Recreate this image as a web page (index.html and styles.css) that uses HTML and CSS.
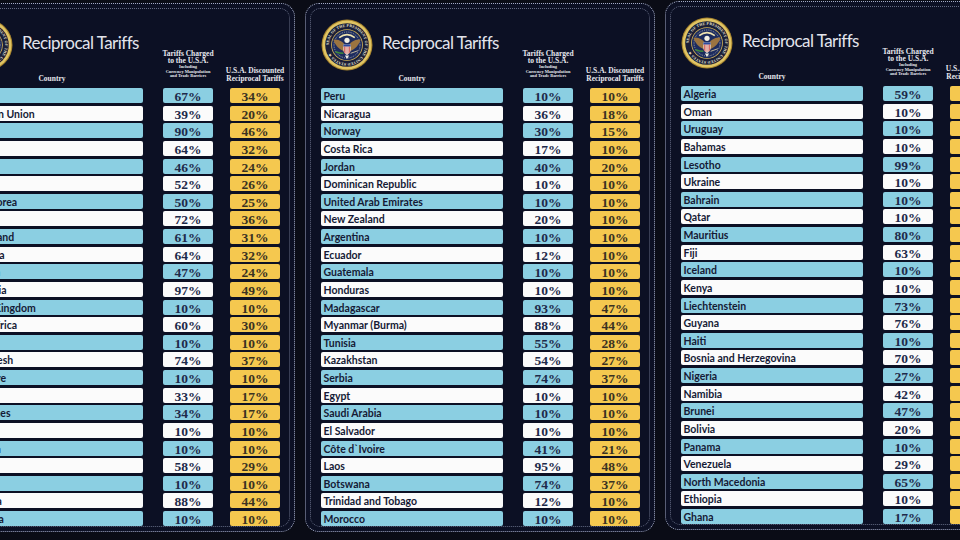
FILE: index.html
```html
<!DOCTYPE html>
<html lang="en">
<head>
<meta charset="utf-8">
<title>Reciprocal Tariffs</title>
<link rel="stylesheet" href="styles.css">
</head>
<body>
<div class="board">

  <!-- Panel 1 -->
  <section class="panel panel-first">
    <div class="head">
      <div class="hcountry">
        <div class="brand">
          <svg class="seal" viewBox="0 0 100 100" aria-hidden="true">
            <defs><path id="ring1" d="M50,50 m-35,0 a35,35 0 1,1 70,0 a35,35 0 1,1 -70,0"/></defs>
            <circle cx="50" cy="50" r="49" fill="#a8852f"/>
            <circle cx="50" cy="50" r="47" fill="#e0c463"/>
            <circle cx="50" cy="50" r="42" fill="#1a1e38"/>
            <text class="sealtext"><textPath href="#ring1">SEAL OF THE PRESIDENT OF THE UNITED STATES ★</textPath></text>
            <circle cx="50" cy="50" r="30.5" fill="#d6b658"/>
            <circle cx="50" cy="50" r="29" fill="#1d2c5e"/>
            <circle cx="50" cy="50" r="25" fill="none" stroke="#e9e6d8" stroke-width="1.6" stroke-dasharray="1.2 2.4"/>
            <path d="M35 36 Q50 24 65 36" fill="none" stroke="#efe3b0" stroke-width="3"/>
            <path d="M50 54 C42 44 34 38 24 40 C27 50 34 58 44 62 Z" fill="#9b7440"/>
            <path d="M50 54 C58 44 66 38 76 40 C73 50 66 58 56 62 Z" fill="#9b7440"/>
            <circle cx="50" cy="41" r="5" fill="#f3f0e4"/>
            <path d="M43 49 h14 v9 q0 8 -7 11 q-7 -3 -7 -11 Z" fill="#f4f2ea"/>
            <rect x="43" y="49" width="14" height="4" fill="#2b4aa0"/>
            <path d="M45 53 v12 M48 53 v14 M52 53 v14 M55 53 v12" stroke="#c8322e" stroke-width="1.5"/>
            <path d="M28 63 Q36 66 43 66" fill="none" stroke="#3e8a3a" stroke-width="3"/>
            <path d="M57 66 L71 61" stroke="#e1d2a8" stroke-width="1.6"/>
            <path d="M46 70 L50 77 L54 70 Z" fill="#f3f0e4"/>
          </svg>
          <div class="title">Reciprocal Tariffs</div>
        </div>
        <div class="hlabel">Country</div>
      </div>
      <div class="htariff">
        <div class="hl">Tariffs Charged</div>
        <div class="hl">to the U.S.A.</div>
        <div class="hs">Including</div>
        <div class="hs">Currency Manipulation</div>
        <div class="hs">and Trade Barriers</div>
      </div>
      <div class="hrecip">
        <div class="hl">U.S.A. Discounted</div>
        <div class="hl">Reciprocal Tariffs</div>
      </div>
    </div>
    <div class="rows">
      <div class="row b"><div class="c">China</div><div class="t">67%</div><div class="r">34%</div></div>
      <div class="row w"><div class="c">European Union</div><div class="t">39%</div><div class="r">20%</div></div>
      <div class="row b"><div class="c">Vietnam</div><div class="t">90%</div><div class="r">46%</div></div>
      <div class="row w"><div class="c">Taiwan</div><div class="t">64%</div><div class="r">32%</div></div>
      <div class="row b"><div class="c">Japan</div><div class="t">46%</div><div class="r">24%</div></div>
      <div class="row w"><div class="c">India</div><div class="t">52%</div><div class="r">26%</div></div>
      <div class="row b"><div class="c">South Korea</div><div class="t">50%</div><div class="r">25%</div></div>
      <div class="row w"><div class="c">Thailand</div><div class="t">72%</div><div class="r">36%</div></div>
      <div class="row b"><div class="c">Switzerland</div><div class="t">61%</div><div class="r">31%</div></div>
      <div class="row w"><div class="c">Indonesia</div><div class="t">64%</div><div class="r">32%</div></div>
      <div class="row b"><div class="c">Malaysia</div><div class="t">47%</div><div class="r">24%</div></div>
      <div class="row w"><div class="c">Cambodia</div><div class="t">97%</div><div class="r">49%</div></div>
      <div class="row b"><div class="c">United Kingdom</div><div class="t">10%</div><div class="r">10%</div></div>
      <div class="row w"><div class="c">South Africa</div><div class="t">60%</div><div class="r">30%</div></div>
      <div class="row b"><div class="c">Brazil</div><div class="t">10%</div><div class="r">10%</div></div>
      <div class="row w"><div class="c">Bangladesh</div><div class="t">74%</div><div class="r">37%</div></div>
      <div class="row b"><div class="c">Singapore</div><div class="t">10%</div><div class="r">10%</div></div>
      <div class="row w"><div class="c">Israel</div><div class="t">33%</div><div class="r">17%</div></div>
      <div class="row b"><div class="c">Philippines</div><div class="t">34%</div><div class="r">17%</div></div>
      <div class="row w"><div class="c">Chile</div><div class="t">10%</div><div class="r">10%</div></div>
      <div class="row b"><div class="c">Australia</div><div class="t">10%</div><div class="r">10%</div></div>
      <div class="row w"><div class="c">Pakistan</div><div class="t">58%</div><div class="r">29%</div></div>
      <div class="row b"><div class="c">Turkey</div><div class="t">10%</div><div class="r">10%</div></div>
      <div class="row w"><div class="c">Sri Lanka</div><div class="t">88%</div><div class="r">44%</div></div>
      <div class="row b"><div class="c">Colombia</div><div class="t">10%</div><div class="r">10%</div></div>
    </div>
  </section>

  <!-- Panel 2 -->
  <section class="panel">
    <div class="head">
      <div class="hcountry">
        <div class="brand">
          <svg class="seal" viewBox="0 0 100 100" aria-hidden="true">
            <defs><path id="ring2" d="M50,50 m-35,0 a35,35 0 1,1 70,0 a35,35 0 1,1 -70,0"/></defs>
            <circle cx="50" cy="50" r="49" fill="#a8852f"/>
            <circle cx="50" cy="50" r="47" fill="#e0c463"/>
            <circle cx="50" cy="50" r="42" fill="#1a1e38"/>
            <text class="sealtext"><textPath href="#ring2">SEAL OF THE PRESIDENT OF THE UNITED STATES ★</textPath></text>
            <circle cx="50" cy="50" r="30.5" fill="#d6b658"/>
            <circle cx="50" cy="50" r="29" fill="#1d2c5e"/>
            <circle cx="50" cy="50" r="25" fill="none" stroke="#e9e6d8" stroke-width="1.6" stroke-dasharray="1.2 2.4"/>
            <path d="M35 36 Q50 24 65 36" fill="none" stroke="#efe3b0" stroke-width="3"/>
            <path d="M50 54 C42 44 34 38 24 40 C27 50 34 58 44 62 Z" fill="#9b7440"/>
            <path d="M50 54 C58 44 66 38 76 40 C73 50 66 58 56 62 Z" fill="#9b7440"/>
            <circle cx="50" cy="41" r="5" fill="#f3f0e4"/>
            <path d="M43 49 h14 v9 q0 8 -7 11 q-7 -3 -7 -11 Z" fill="#f4f2ea"/>
            <rect x="43" y="49" width="14" height="4" fill="#2b4aa0"/>
            <path d="M45 53 v12 M48 53 v14 M52 53 v14 M55 53 v12" stroke="#c8322e" stroke-width="1.5"/>
            <path d="M28 63 Q36 66 43 66" fill="none" stroke="#3e8a3a" stroke-width="3"/>
            <path d="M57 66 L71 61" stroke="#e1d2a8" stroke-width="1.6"/>
            <path d="M46 70 L50 77 L54 70 Z" fill="#f3f0e4"/>
          </svg>
          <div class="title">Reciprocal Tariffs</div>
        </div>
        <div class="hlabel">Country</div>
      </div>
      <div class="htariff">
        <div class="hl">Tariffs Charged</div>
        <div class="hl">to the U.S.A.</div>
        <div class="hs">Including</div>
        <div class="hs">Currency Manipulation</div>
        <div class="hs">and Trade Barriers</div>
      </div>
      <div class="hrecip">
        <div class="hl">U.S.A. Discounted</div>
        <div class="hl">Reciprocal Tariffs</div>
      </div>
    </div>
    <div class="rows">
      <div class="row b"><div class="c">Peru</div><div class="t">10%</div><div class="r">10%</div></div>
      <div class="row w"><div class="c">Nicaragua</div><div class="t">36%</div><div class="r">18%</div></div>
      <div class="row b"><div class="c">Norway</div><div class="t">30%</div><div class="r">15%</div></div>
      <div class="row w"><div class="c">Costa Rica</div><div class="t">17%</div><div class="r">10%</div></div>
      <div class="row b"><div class="c">Jordan</div><div class="t">40%</div><div class="r">20%</div></div>
      <div class="row w"><div class="c">Dominican Republic</div><div class="t">10%</div><div class="r">10%</div></div>
      <div class="row b"><div class="c">United Arab Emirates</div><div class="t">10%</div><div class="r">10%</div></div>
      <div class="row w"><div class="c">New Zealand</div><div class="t">20%</div><div class="r">10%</div></div>
      <div class="row b"><div class="c">Argentina</div><div class="t">10%</div><div class="r">10%</div></div>
      <div class="row w"><div class="c">Ecuador</div><div class="t">12%</div><div class="r">10%</div></div>
      <div class="row b"><div class="c">Guatemala</div><div class="t">10%</div><div class="r">10%</div></div>
      <div class="row w"><div class="c">Honduras</div><div class="t">10%</div><div class="r">10%</div></div>
      <div class="row b"><div class="c">Madagascar</div><div class="t">93%</div><div class="r">47%</div></div>
      <div class="row w"><div class="c">Myanmar (Burma)</div><div class="t">88%</div><div class="r">44%</div></div>
      <div class="row b"><div class="c">Tunisia</div><div class="t">55%</div><div class="r">28%</div></div>
      <div class="row w"><div class="c">Kazakhstan</div><div class="t">54%</div><div class="r">27%</div></div>
      <div class="row b"><div class="c">Serbia</div><div class="t">74%</div><div class="r">37%</div></div>
      <div class="row w"><div class="c">Egypt</div><div class="t">10%</div><div class="r">10%</div></div>
      <div class="row b"><div class="c">Saudi Arabia</div><div class="t">10%</div><div class="r">10%</div></div>
      <div class="row w"><div class="c">El Salvador</div><div class="t">10%</div><div class="r">10%</div></div>
      <div class="row b"><div class="c">Côte d`Ivoire</div><div class="t">41%</div><div class="r">21%</div></div>
      <div class="row w"><div class="c">Laos</div><div class="t">95%</div><div class="r">48%</div></div>
      <div class="row b"><div class="c">Botswana</div><div class="t">74%</div><div class="r">37%</div></div>
      <div class="row w"><div class="c">Trinidad and Tobago</div><div class="t">12%</div><div class="r">10%</div></div>
      <div class="row b"><div class="c">Morocco</div><div class="t">10%</div><div class="r">10%</div></div>
    </div>
  </section>

  <!-- Panel 3 -->
  <section class="panel panel-shift">
    <div class="head">
      <div class="hcountry">
        <div class="brand">
          <svg class="seal" viewBox="0 0 100 100" aria-hidden="true">
            <defs><path id="ring3" d="M50,50 m-35,0 a35,35 0 1,1 70,0 a35,35 0 1,1 -70,0"/></defs>
            <circle cx="50" cy="50" r="49" fill="#a8852f"/>
            <circle cx="50" cy="50" r="47" fill="#e0c463"/>
            <circle cx="50" cy="50" r="42" fill="#1a1e38"/>
            <text class="sealtext"><textPath href="#ring3">SEAL OF THE PRESIDENT OF THE UNITED STATES ★</textPath></text>
            <circle cx="50" cy="50" r="30.5" fill="#d6b658"/>
            <circle cx="50" cy="50" r="29" fill="#1d2c5e"/>
            <circle cx="50" cy="50" r="25" fill="none" stroke="#e9e6d8" stroke-width="1.6" stroke-dasharray="1.2 2.4"/>
            <path d="M35 36 Q50 24 65 36" fill="none" stroke="#efe3b0" stroke-width="3"/>
            <path d="M50 54 C42 44 34 38 24 40 C27 50 34 58 44 62 Z" fill="#9b7440"/>
            <path d="M50 54 C58 44 66 38 76 40 C73 50 66 58 56 62 Z" fill="#9b7440"/>
            <circle cx="50" cy="41" r="5" fill="#f3f0e4"/>
            <path d="M43 49 h14 v9 q0 8 -7 11 q-7 -3 -7 -11 Z" fill="#f4f2ea"/>
            <rect x="43" y="49" width="14" height="4" fill="#2b4aa0"/>
            <path d="M45 53 v12 M48 53 v14 M52 53 v14 M55 53 v12" stroke="#c8322e" stroke-width="1.5"/>
            <path d="M28 63 Q36 66 43 66" fill="none" stroke="#3e8a3a" stroke-width="3"/>
            <path d="M57 66 L71 61" stroke="#e1d2a8" stroke-width="1.6"/>
            <path d="M46 70 L50 77 L54 70 Z" fill="#f3f0e4"/>
          </svg>
          <div class="title">Reciprocal Tariffs</div>
        </div>
        <div class="hlabel">Country</div>
      </div>
      <div class="htariff">
        <div class="hl">Tariffs Charged</div>
        <div class="hl">to the U.S.A.</div>
        <div class="hs">Including</div>
        <div class="hs">Currency Manipulation</div>
        <div class="hs">and Trade Barriers</div>
      </div>
      <div class="hrecip">
        <div class="hl">U.S.A. Discounted</div>
        <div class="hl">Reciprocal Tariffs</div>
      </div>
    </div>
    <div class="rows">
      <div class="row b"><div class="c">Algeria</div><div class="t">59%</div><div class="r">30%</div></div>
      <div class="row w"><div class="c">Oman</div><div class="t">10%</div><div class="r">10%</div></div>
      <div class="row b"><div class="c">Uruguay</div><div class="t">10%</div><div class="r">10%</div></div>
      <div class="row w"><div class="c">Bahamas</div><div class="t">10%</div><div class="r">10%</div></div>
      <div class="row b"><div class="c">Lesotho</div><div class="t">99%</div><div class="r">50%</div></div>
      <div class="row w"><div class="c">Ukraine</div><div class="t">10%</div><div class="r">10%</div></div>
      <div class="row b"><div class="c">Bahrain</div><div class="t">10%</div><div class="r">10%</div></div>
      <div class="row w"><div class="c">Qatar</div><div class="t">10%</div><div class="r">10%</div></div>
      <div class="row b"><div class="c">Mauritius</div><div class="t">80%</div><div class="r">40%</div></div>
      <div class="row w"><div class="c">Fiji</div><div class="t">63%</div><div class="r">32%</div></div>
      <div class="row b"><div class="c">Iceland</div><div class="t">10%</div><div class="r">10%</div></div>
      <div class="row w"><div class="c">Kenya</div><div class="t">10%</div><div class="r">10%</div></div>
      <div class="row b"><div class="c">Liechtenstein</div><div class="t">73%</div><div class="r">37%</div></div>
      <div class="row w"><div class="c">Guyana</div><div class="t">76%</div><div class="r">38%</div></div>
      <div class="row b"><div class="c">Haiti</div><div class="t">10%</div><div class="r">10%</div></div>
      <div class="row w"><div class="c">Bosnia and Herzegovina</div><div class="t">70%</div><div class="r">35%</div></div>
      <div class="row b"><div class="c">Nigeria</div><div class="t">27%</div><div class="r">14%</div></div>
      <div class="row w"><div class="c">Namibia</div><div class="t">42%</div><div class="r">21%</div></div>
      <div class="row b"><div class="c">Brunei</div><div class="t">47%</div><div class="r">24%</div></div>
      <div class="row w"><div class="c">Bolivia</div><div class="t">20%</div><div class="r">10%</div></div>
      <div class="row b"><div class="c">Panama</div><div class="t">10%</div><div class="r">10%</div></div>
      <div class="row w"><div class="c">Venezuela</div><div class="t">29%</div><div class="r">15%</div></div>
      <div class="row b"><div class="c">North Macedonia</div><div class="t">65%</div><div class="r">33%</div></div>
      <div class="row w"><div class="c">Ethiopia</div><div class="t">10%</div><div class="r">10%</div></div>
      <div class="row b"><div class="c">Ghana</div><div class="t">17%</div><div class="r">10%</div></div>
    </div>
  </section>

</div>
</body>
</html>
```

FILE: styles.css
```css
html, body {
  margin: 0;
  padding: 0;
  width: 960px;
  height: 540px;
  overflow: hidden;
  background: #0a0c16;
}

.board {
  display: flex;
  gap: 10px;
  width: max-content;
  margin-left: -55px;
}

.panel {
  position: relative;
  box-sizing: border-box;
  width: 350px;
  height: 529px;
  margin-top: 3px;
  padding: 0 14px 0 15px;
  border: 1px dotted #a3aac4;
  border-radius: 14px;
  background: #0c1024;
  display: flex;
  flex-direction: column;
}

.panel::before {
  content: "";
  position: absolute;
  inset: 4px;
  border: 1px dotted rgba(160, 168, 196, 0.6);
  border-radius: 10px;
  pointer-events: none;
}

.panel-shift {
  margin-top: 1px;
}

.panel-first .c {
  text-indent: -4px;
}

/* ---------- header ---------- */
.head {
  display: flex;
  align-items: flex-end;
  height: 84px;
  flex: none;
}

.hcountry {
  align-self: stretch;
  width: 182px;
  box-sizing: border-box;
  padding: 15px 0 5px;
  display: flex;
  flex-direction: column;
}

.brand {
  display: flex;
  align-items: flex-start;
  gap: 9px;
}

.seal {
  width: 52px;
  height: 52px;
  flex: none;
  display: block;
}

.sealtext {
  font-family: "Liberation Serif", serif;
  font-weight: 700;
  font-size: 7.4px;
  letter-spacing: 0.35px;
  fill: #eee9d6;
}

.title {
  margin-top: 13.5px;
  font-family: Lato, "Open Sans", sans-serif;
  font-weight: 400;
  font-size: 17px;
  line-height: 1.2;
  letter-spacing: -0.55px;
  color: #e3e4ec;
  white-space: nowrap;
}

.hlabel {
  margin-top: auto;
  text-align: center;
  font-family: "Liberation Serif", serif;
  font-weight: 700;
  font-size: 7.5px;
  line-height: 8px;
  color: #e6e7ee;
}

.htariff,
.hrecip {
  width: 50px;
  display: flex;
  flex-direction: column;
  align-items: center;
  font-family: "Liberation Serif", serif;
  font-weight: 700;
  color: #e6e7ee;
  white-space: nowrap;
}

.htariff {
  margin-left: 20px;
  margin-bottom: 9.5px;
}

.hrecip {
  margin-left: 17px;
  margin-bottom: 5px;
}

.hl {
  font-size: 7.5px;
  line-height: 7.8px;
}

.hrecip .hl {
  line-height: 8px;
}

.hs {
  font-size: 4.4px;
  line-height: 4.4px;
}

/* ---------- rows ---------- */
.rows {
  display: flex;
  flex-direction: column;
  gap: 2.625px;
}

.row {
  display: flex;
  height: 15px;
}

.c,
.t,
.r {
  box-sizing: border-box;
  height: 15px;
  padding-top: 1px;
  line-height: 15px;
  border-radius: 2px;
  white-space: nowrap;
}

.c {
  width: 182px;
  padding-left: 2.5px;
  font-family: Lato, "Open Sans", sans-serif;
  font-weight: 700;
  font-size: 10.5px;
  color: #151a35;
}

.t,
.r {
  width: 50px;
  text-align: center;
  font-family: "Liberation Serif", serif;
  font-weight: 700;
  font-size: 13.5px;
}

.t {
  margin-left: 20px;
  color: #1e2a4a;
}

.r {
  margin-left: 17px;
  background: #f5c84f;
  color: #3a3222;
}

.b .c,
.b .t {
  background: #8bcfe2;
}

.w .c,
.w .t {
  background: #fbfbfb;
}
```
